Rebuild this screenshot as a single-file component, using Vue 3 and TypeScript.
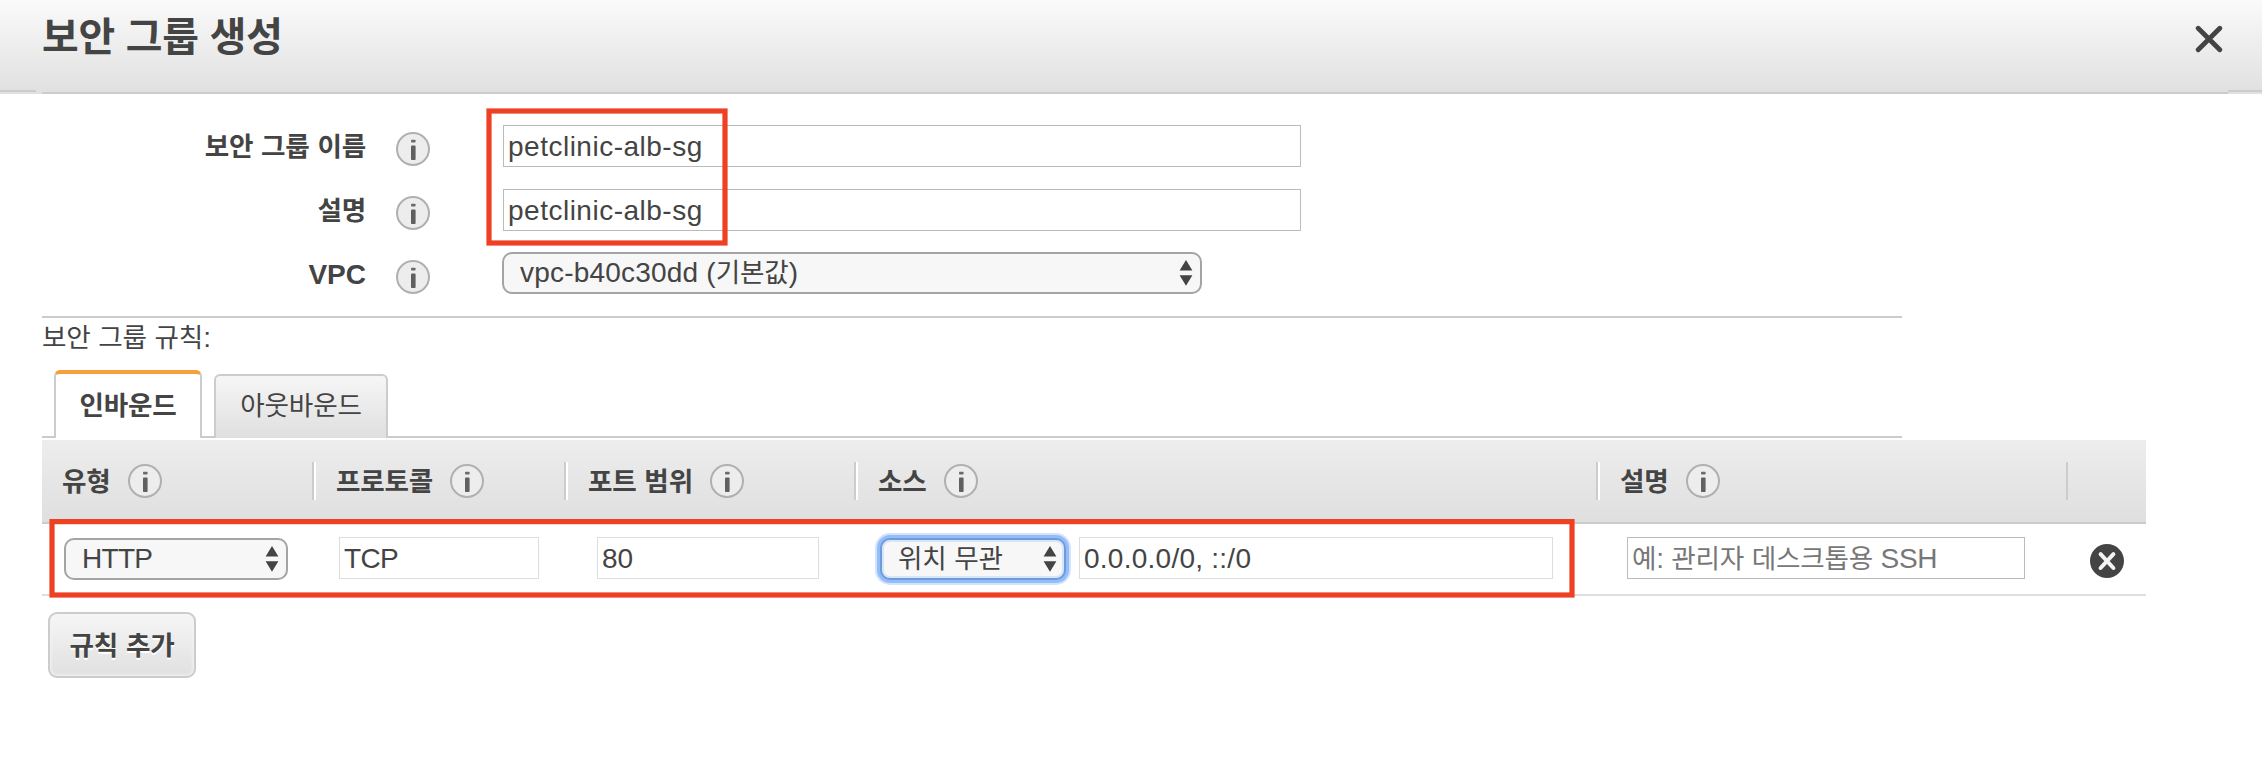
<script setup lang="ts">
import { h, type FunctionalComponent } from 'vue'

interface Field {
  label: string
  value: string
  kind: 'input' | 'select'
}

interface Column {
  key: string
  title: string
}

const fields: Field[] = [
  { label: '보안 그룹 이름', value: 'petclinic-alb-sg', kind: 'input' },
  { label: '설명', value: 'petclinic-alb-sg', kind: 'input' },
  { label: 'VPC', value: 'vpc-b40c30dd (기본값)', kind: 'select' },
]

const columns: Column[] = [
  { key: 'type', title: '유형' },
  { key: 'protocol', title: '프로토콜' },
  { key: 'port', title: '포트 범위' },
  { key: 'source', title: '소스' },
  { key: 'note', title: '설명' },
  { key: 'action', title: '' },
]

// Sets Hangul runs and Latin runs with their own metrics.
const Txt: FunctionalComponent<{ t: string }> = (props) =>
  h(
    'span',
    { class: 'txt' },
    (props.t.match(/[가-힣]+(?: [가-힣]+)*|[^가-힣]+/g) ?? []).map((run) =>
      h('span', { class: /[가-힣]/.test(run) ? 'ko' : 'la' }, run),
    ),
  )
Txt.props = ['t']

const InfoIcon: FunctionalComponent = () =>
  h('svg', { class: 'info', viewBox: '0 0 34 34', width: 34, height: 34 }, [
    h('circle', { cx: 17, cy: 17, r: 16, fill: '#ededed', stroke: '#b0b0b0', 'stroke-width': 2 }),
    h('rect', { x: 15, y: 7.8, width: 4.6, height: 2.8, rx: 0.8, fill: '#6c6c6c' }),
    h('rect', { x: 15, y: 13.6, width: 4.6, height: 14.4, rx: 0.8, fill: '#606060' }),
  ])

const Arrows: FunctionalComponent = () =>
  h('svg', { class: 'arrows', viewBox: '0 0 14 26', width: 14, height: 26 }, [
    h('path', { d: 'M7 0 L13.4 10.6 H0.6 Z M0.6 15.2 H13.4 L7 25.8 Z', fill: '#444' }),
  ])
</script>

<template>
  <div class="dialog">
    <header class="head">
      <h1><Txt t="보안 그룹 생성" /></h1>
      <svg class="close" viewBox="0 0 28 28" width="28" height="28">
        <path d="M3.2 3.2 L24.8 24.8 M24.8 3.2 L3.2 24.8" stroke="#444" stroke-width="4.8" stroke-linecap="round" />
      </svg>
      <div class="edge"><i class="side left"></i><i class="main"></i><i class="side right"></i></div>
    </header>

    <section class="form">
      <div v-for="f in fields" :key="f.label" class="row">
        <label><Txt :t="f.label" /></label>
        <InfoIcon />
        <div v-if="f.kind === 'input'" class="input wide"><Txt :t="f.value" /></div>
        <div v-else class="select vpc"><Txt :t="f.value" /><Arrows /></div>
      </div>
    </section>

    <div class="rules-title"><Txt t="보안 그룹 규칙:" /></div>

    <nav class="tabs">
      <div class="tab active"><Txt t="인바운드" /></div>
      <div class="tab"><Txt t="아웃바운드" /></div>
    </nav>

    <div class="table">
      <div class="grid thead">
        <div v-for="c in columns" :key="c.key" class="th" :class="c.key">
          <template v-if="c.title"><Txt :t="c.title" /><InfoIcon /></template>
        </div>
      </div>
      <div class="grid tbody">
        <div class="td type"><div class="select"><Txt t="HTTP" /><Arrows /></div></div>
        <div class="td protocol"><div class="input dim"><Txt t="TCP" /></div></div>
        <div class="td port"><div class="input dim"><Txt t="80" /></div></div>
        <div class="td source">
          <div class="select focus"><Txt t="위치 무관" /><Arrows /></div>
          <div class="input dim cidr"><Txt t="0.0.0.0/0, ::/0" /></div>
        </div>
        <div class="td note"><div class="input hint"><Txt t="예: 관리자 데스크톱용 SSH" /></div></div>
        <div class="td action">
          <svg viewBox="0 0 34 34" width="34" height="34">
            <circle cx="17" cy="17" r="17" fill="#444" />
            <path d="M10.6 10.2 L23.4 24 M23.4 10.2 L10.6 24" stroke="#f4f4f4" stroke-width="4" stroke-linecap="round" />
          </svg>
        </div>
      </div>
    </div>

    <button class="add"><Txt t="규칙 추가" /></button>

    <svg class="marks" viewBox="0 0 2262 782" width="2262" height="782">
      <rect x="489" y="111" width="236" height="132" />
      <rect x="52" y="521.6" width="1520" height="73.4" />
    </svg>
  </div>
</template>

<style>
body {
  margin: 0;
  background: #fff;
}
.txt {
  white-space: pre;
}
.txt .la {
  letter-spacing: var(--la-ls, 0.4px);
}
.txt .ko {
  font-family: 'Noto Sans CJK KR', sans-serif;
  font-size: 0.95em;
  line-height: 0;
  letter-spacing: -0.2px;
  word-spacing: 2px;
}
.info,
.arrows {
  display: block;
  flex: none;
}
</style>

<style scoped>
.dialog {
  position: relative;
  width: 2262px;
  height: 782px;
  overflow: hidden;
  box-sizing: border-box;
  background: #fff;
  color: #444;
  font: 28px/42px 'Liberation Sans', 'Noto Sans CJK KR', sans-serif;
}
.dialog * {
  box-sizing: border-box;
}
.head {
  position: relative;
  height: 94px;
  display: flex;
  justify-content: space-between;
  padding: 0 39px 0 42px;
  background: linear-gradient(#fafafa, #e0e0e0);
}
h1 {
  margin: 7px 0 0;
  font-size: 42px;
  line-height: 60px;
  font-weight: 700;
}
.close {
  margin-top: 25px;
}
.edge {
  position: absolute;
  inset: auto 0 0 0;
  height: 4px;
  display: flex;
}
.edge .side {
  height: 2px;
  background: #ccc;
}
.edge .left {
  width: 36px;
}
.edge .right {
  width: 34px;
}
.edge .main {
  flex: 1;
  margin: 2px 0 0 6px;
  height: 2px;
  background: #ccc;
}
.form {
  width: 1860px;
  height: 224px;
  margin-left: 42px;
  padding-top: 20px;
  border-bottom: 2px solid #ccc;
}
.row {
  display: flex;
  align-items: center;
  height: 64px;
}
.row label {
  width: 324px;
  margin-right: 30px;
  padding-top: 2px;
  text-align: right;
  font-weight: 700;
  --la-ls: 0;
}
.row .info {
  margin: 6px 73px 0 0;
}
.input {
  height: 42px;
  line-height: 42px;
  padding-left: 4px;
  border: 1px solid #bbb;
  background: #fff;
}
.input.dim {
  border-color: #ddd;
}
.input.hint {
  color: #777;
  width: 398px;
  --la-ls: -0.3px;
}
.wide {
  width: 798px;
  --la-ls: 0.5px;
}
.select {
  display: flex;
  justify-content: space-between;
  align-items: center;
  height: 42px;
  line-height: 38px;
  padding: 0 7px 0 16px;
  border: 2px solid #a4a4a4;
  border-radius: 10px;
  background: #f7f7f7;
}
.vpc {
  width: 700px;
  margin: -2px 0 0 -1px;
  --la-ls: 0.2px;
}
.rules-title {
  height: 52px;
  padding: 0 0 0 42px;
  line-height: 40px;
}
.tabs {
  display: flex;
  align-items: flex-end;
  gap: 12px;
  width: 1860px;
  height: 68px;
  margin-left: 42px;
  padding-left: 12px;
  background: linear-gradient(#ccc, #ccc) 0 100% / 100% 2px no-repeat;
}
.tab {
  height: 64px;
  padding: 9px 0 0;
  width: 174px;
  text-align: center;
  border: 2px solid #ccc;
  border-bottom: 0;
  border-radius: 6px 6px 0 0;
  background: linear-gradient(#f6f6f6, #dfdfdf);
}
.tab.active {
  height: 68px;
  width: 148px;
  padding-top: 11px;
  font-weight: 700;
  border-top: 4px solid #f79f38;
  background: #fff;
}
.table {
  width: 2104px;
  margin: 2px 0 0 42px;
}
.grid {
  display: grid;
  grid-template-columns: 270px 252px 290px 742px 470px 80px;
}
.thead {
  height: 84px;
  border-bottom: 2px solid #ccc;
  background: linear-gradient(#ededed, #dfdfdf);
  font-weight: 700;
}
.th {
  display: flex;
  align-items: center;
  gap: 17px;
  height: 38px;
  margin-top: 22px;
  padding-left: 20px;
  border-left: 2px solid #ccc;
  box-shadow: inset 2px 0 #fff;
}
.th .txt {
  padding-top: 2px;
}
.th + .th {
  padding-left: 22px;
}
.th.type {
  border-left: 0;
  box-shadow: none;
}
.th.action {
  box-shadow: none;
}
.tbody {
  height: 72px;
  border-bottom: 2px solid #dedede;
}
.td {
  display: flex;
  align-items: flex-start;
  padding-top: 13px;
}
.td.type {
  padding: 14px 0 0 22px;
  --la-ls: -0.7px;
}
.td.type .select {
  width: 224px;
}
.td.protocol {
  padding-left: 27px;
  --la-ls: -0.7px;
}
.td.protocol .input {
  width: 200px;
}
.td.port {
  padding-left: 33px;
  --la-ls: 0;
}
.td.port .input {
  width: 222px;
}
.td.source {
  padding-left: 26px;
  --la-ls: 0.25px;
}
.select.focus {
  width: 186px;
  margin: 1px 13px 0 0;
  border-color: #6f9bd8;
  box-shadow:
    0 0 0 3px #93bdfa,
    0 0 0 5px #d3e3fc,
    inset 0 0 0 2px #d6e5fb;
}
.cidr {
  width: 474px;
}
.td.note {
  padding-left: 31px;
}
.td.action {
  padding: 20px 0 0 24px;
}
.add {
  display: block;
  width: 148px;
  height: 66px;
  margin: 16px 0 0 48px;
  padding: 2px 0 0;
  border: 2px solid #ccc;
  border-radius: 9px;
  background: linear-gradient(#f6f6f6, #e0e0e0);
  box-shadow: inset 0 0 3px 1px #f4f4f4;
  color: #444;
  font: inherit;
  font-weight: 700;
  line-height: 60px;
  text-shadow: 0 2px #fff;
}
/* Highlight frames drawn over the form and the rule row */
.marks {
  position: absolute;
  inset: 0;
  pointer-events: none;
}
.marks rect {
  fill: none;
  stroke: #ee4023;
  stroke-width: 5.2;
}
</style>
